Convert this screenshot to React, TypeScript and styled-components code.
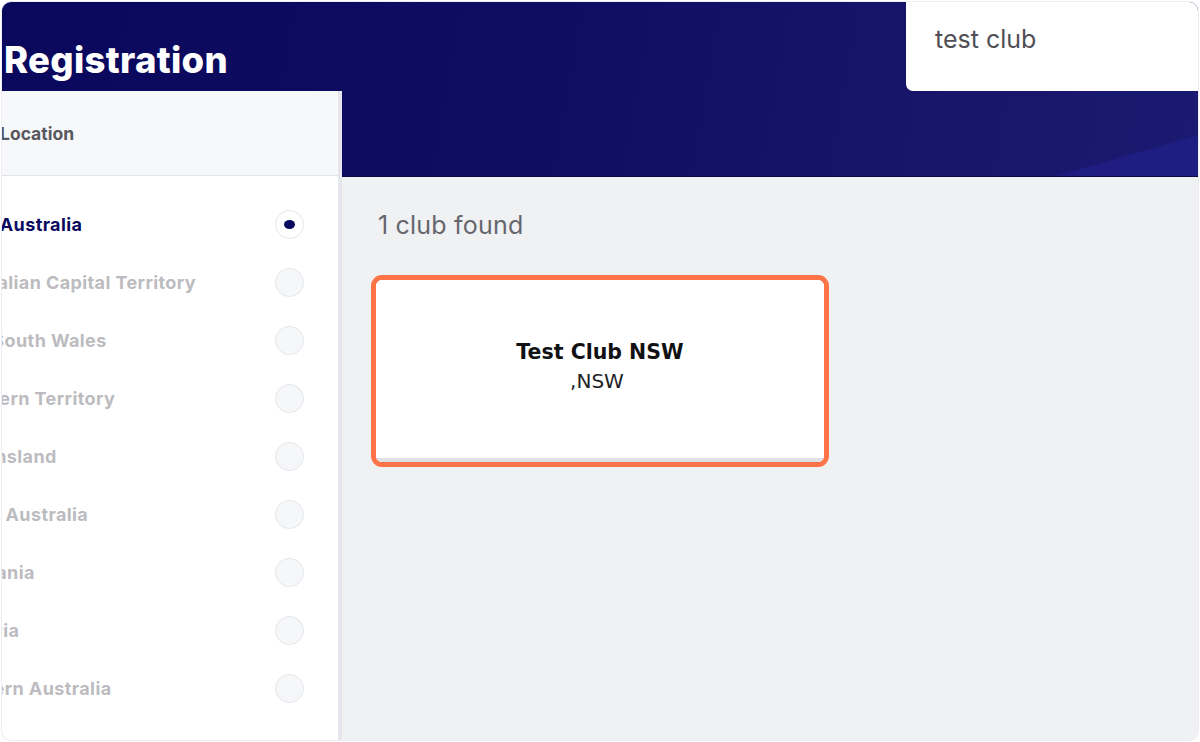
import React from 'react';
import styled, { createGlobalStyle } from 'styled-components';

const GlobalStyle = createGlobalStyle`
  html, body {
    margin: 0;
    padding: 0;
    background: #ffffff;
  }
  * {
    box-sizing: border-box;
  }
`;

const states = [
  'All of Australia',
  'Australian Capital Territory',
  'New South Wales',
  'Northern Territory',
  'Queensland',
  'South Australia',
  'Tasmania',
  'Victoria',
  'Western Australia',
];

const Frame = styled.div`
  width: 1200px;
  height: 742px;
  padding: 2px;
  background: #ffffff;
`;

const Window = styled.div`
  position: relative;
  width: 100%;
  height: 100%;
  border-radius: 9px;
  overflow: hidden;
  background: #f0f1f3;
  display: grid;
  grid-template-columns: 340px 1fr;
  grid-template-rows: 89px 86px 1fr;
  font-family: Inter, 'Liberation Sans', sans-serif;
  box-shadow: 0 0 0 1px #eeeef2;
`;

const Header = styled.header`
  grid-column: 1 / 3;
  grid-row: 1 / 3;
  background:
    linear-gradient(164deg, transparent 0%, transparent 92%, rgba(36, 34, 150, 0.45) 92.3%, rgba(36, 34, 150, 0.45) 100%),
    linear-gradient(100deg, #09085c 0%, #0e0d63 45%, #161569 75%, #1b1a72 100%);
  border-bottom: 1px solid #0a0a4a;
  display: flex;
  justify-content: space-between;
  align-items: flex-start;
`;

const Title = styled.h1`
  margin: 36px 0 0 2px;
  font-size: 36.5px;
  font-weight: 800;
  color: #ffffff;
  letter-spacing: 0.3px;
  line-height: 44px;
`;

const Search = styled.div`
  width: 292px;
  height: 89px;
  background: #ffffff;
  border-bottom-left-radius: 7px;
  padding: 22px 0 0 29px;
  font-size: 25px;
  color: #4f4f55;
  line-height: 30px;
`;

const Sidebar = styled.aside`
  grid-column: 1;
  grid-row: 2 / 4;
  z-index: 1;
  background: #ffffff;
  border-right: 4px solid #e6e7ec;
  display: flex;
  flex-direction: column;
  overflow: hidden;
`;

const SidebarHead = styled.div`
  height: 85px;
  background: #f7f8fa;
  border-bottom: 1px solid #e3e4e8;
  display: flex;
  align-items: center;
  font-size: 17.5px;
  font-weight: 700;
  color: #58585e;
  margin-left: -2px;
`;

const List = styled.ul`
  list-style: none;
  margin: 0;
  padding: 19px 0 0;
`;

const Row = styled.li<{ active?: boolean }>`
  height: 58px;
  display: flex;
  align-items: center;
  justify-content: space-between;
  padding-right: 34px;
  font-size: 18px;
  font-weight: 700;
  letter-spacing: 0.4px;
  color: ${({ active }) => (active ? '#0a0960' : '#bcbcc0')};
`;

const Label = styled.span`
  margin-left: -55px;
  white-space: pre;
`;

const Radio = styled.span<{ active?: boolean }>`
  flex-shrink: 0;
  width: 29px;
  height: 29px;
  border-radius: 50%;
  border: 1px solid #e6e6ea;
  background: ${({ active }) => (active ? '#ffffff' : '#f6f7f9')};
  display: flex;
  align-items: center;
  justify-content: center;
  &::after {
    content: '';
    display: ${({ active }) => (active ? 'block' : 'none')};
    width: 11px;
    height: 9px;
    border-radius: 50%;
    background: #0a0960;
  }
`;

const Main = styled.main`
  grid-column: 2;
  grid-row: 3;
  padding: 33px 0 0 36px;
  display: flex;
  flex-direction: column;
  align-items: flex-start;
`;

const Count = styled.div`
  font-size: 25px;
  color: #66666c;
  line-height: 30px;
  letter-spacing: 0.2px;
  margin-bottom: 35px;
`;

const Highlight = styled.div`
  margin-left: -7px;
  border: 5px solid #fe7446;
  border-radius: 11px;
  overflow: hidden;
`;

const Card = styled.div`
  width: 448px;
  height: 182px;
  background: #ffffff;
  border-bottom: 4px solid #dfe0e3;
  display: flex;
  flex-direction: column;
  align-items: center;
  justify-content: center;
  padding-bottom: 4px;
  font-family: 'DejaVu Sans', Verdana, sans-serif;
`;

const ClubName = styled.div`
  font-size: 20.5px;
  font-weight: 700;
  color: #111114;
  line-height: 28px;
`;

const ClubState = styled.div`
  font-size: 20px;
  color: #222226;
  line-height: 30px;
  margin-left: -6px;
`;

function App() {
  return (
    <Frame>
      <GlobalStyle />
      <Window>
        <Header>
          <Title>Registration</Title>
          <Search>test club</Search>
        </Header>
        <Sidebar>
          <SidebarHead>Location</SidebarHead>
          <List>
            {states.map((s, i) => (
              <Row key={s} active={i === 0}>
                <Label>{s}</Label>
                <Radio active={i === 0} />
              </Row>
            ))}
          </List>
        </Sidebar>
        <Main>
          <Count>1 club found</Count>
          <Highlight>
            <Card>
              <ClubName>Test Club NSW</ClubName>
              <ClubState>,NSW</ClubState>
            </Card>
          </Highlight>
        </Main>
      </Window>
    </Frame>
  );
}

export default App;
